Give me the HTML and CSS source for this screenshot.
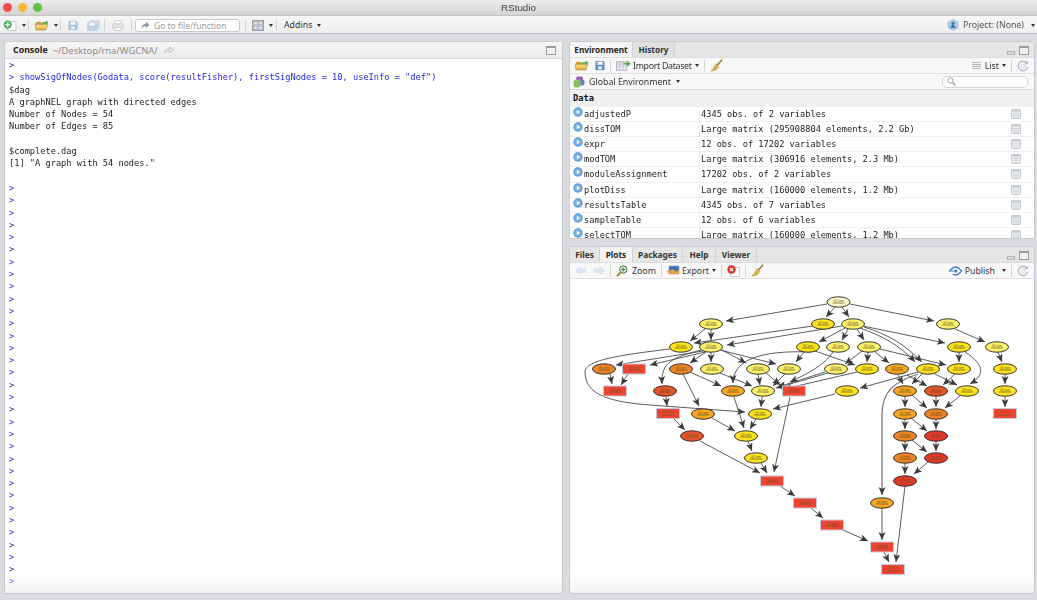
FILE: index.html
```html
<!DOCTYPE html>
<html lang="en">
<head>
<meta charset="utf-8">
<title>RStudio</title>
<link rel="stylesheet" href="styles.css">
</head>
<body>
<svg class="defs" width="0" height="0" aria-hidden="true">
  <defs>
    <linearGradient id="folderFill" x1="0" y1="0" x2="0" y2="1"><stop offset="0" stop-color="#fbe58a"/><stop offset="1" stop-color="#d9a93a"/></linearGradient>
    <linearGradient id="floppyFill" x1="0" y1="0" x2="0" y2="1"><stop offset="0" stop-color="#7fa9d6"/><stop offset="1" stop-color="#4a7fb8"/></linearGradient>
    <symbol id="i-folder" viewBox="0 0 16 12">
      <path d="M1 4 L3 2 H7 L8 3 H12 V5 H1Z" fill="#c79a3a"/>
      <path d="M1 5 H13 L15 5 L12.500 11 H2 Z" fill="url(#folderFill)" stroke="#a87f2a" stroke-width=".6"/>
      <path d="M9 2.500 H12.500 V.5 L15.800 3 L12.500 5.500 V3.800 H9Z" fill="#4faa4b"/>
    </symbol>
    <symbol id="i-floppy" viewBox="0 0 12 12">
      <path d="M1 1 H10 L11 2 V11 H1Z" fill="url(#floppyFill)" stroke="#3f6f9f" stroke-width=".6"/>
      <rect x="3" y="1.500" width="6" height="3.500" fill="#fff"/>
      <rect x="3.500" y="7" width="5" height="3.600" fill="#dfe9f3"/>
    </symbol>
    <symbol id="i-broom" viewBox="0 0 14 14">
      <path d="M13 .8 L7.500 7" stroke="#9c6b2c" stroke-width="1.500" fill="none"/>
      <path d="M6.500 5 L9.500 8 C8 11 5 13 1 13 C3 11.500 4.500 8 6.500 5Z" fill="#e5b84d" stroke="#a9802b" stroke-width=".5"/>
      <path d="M6 9 L3.800 12 M7.500 9.500 L5.500 12" stroke="#a9802b" stroke-width=".5"/>
    </symbol>
    <symbol id="i-refresh" viewBox="0 0 12 12">
      <path d="M9.800 3.200 A4.700 4.700 0 1 0 10.600 6.800" fill="none" stroke="#aebccb" stroke-width="1.300"/>
      <path d="M7.500 4.200 H11 V.8Z" fill="#aebccb"/>
      <circle cx="6" cy="6" r="2" fill="none" stroke="#ccd5de"/>
    </symbol>
    <symbol id="i-table" viewBox="0 0 11 11">
      <rect x=".5" y=".5" width="10" height="10" rx="1" fill="#f1f3f6" stroke="#bcc2ca"/>
      <rect x="1" y="1" width="9" height="2" fill="#c7ccd3"/>
      <path d="M1 5 H10 M1 7 H10 M1 9 H10 M3.500 3 V10 M5.500 3 V10 M7.500 3 V10" stroke="#ccd1d8" stroke-width=".6"/>
    </symbol>
    <symbol id="i-play" viewBox="0 0 10 10">
      <circle cx="5" cy="5" r="4.700" fill="#5a97d3"/>
      <circle cx="5" cy="5" r="3.600" fill="#7eb1e2"/>
      <path d="M3.800 2.800 L7 5 L3.800 7.200Z" fill="#fff"/>
    </symbol>
    <symbol id="i-min" viewBox="0 0 10 5"><rect x=".5" y="1" width="9" height="3" fill="#e8e8e8" stroke="#9a9a9a"/></symbol>
    <symbol id="i-max" viewBox="0 0 10 9"><rect x=".5" y=".5" width="9" height="8" fill="#f2f2f2" stroke="#9a9a9a"/><path d="M1 1.500 H9" stroke="#9a9a9a"/></symbol>
    <symbol id="i-import" viewBox="0 0 16 11">
      <rect x=".5" y="1.500" width="11" height="9" fill="#e9ecf0" stroke="#a9b0b8"/>
      <path d="M.5 4 H11.500 M.5 6.500 H11.500 M4 1.500 V10.500 M7.500 1.500 V10.500" stroke="#b4bac1" stroke-width=".6"/>
      <path d="M8 2.800 H12 V.5 L15.800 3.500 L12 6.500 V4.500 H8Z" fill="#4faa4b"/>
    </symbol>
    <g id="n-e">
      <ellipse class="node-shape" rx="11.500" ry="5.200"/>
      <text class="node-label" y="-.4">GO term</text>
      <text class="node-label" y="2.400">annotation</text>
    </g>
    <g id="n-r">
      <rect class="node-box" x="-11.500" y="-5" width="23" height="10"/>
      <text class="node-label" y="-.4">GO term</text>
      <text class="node-label" y="2.400">annotation</text>
    </g>
    <marker id="arrow" markerWidth="9" markerHeight="8" refX="8" refY="3.500" orient="auto" markerUnits="userSpaceOnUse">
      <path d="M0 0 L8 3.500 L0 7 L2 3.500Z" fill="#3a3a3a"/>
    </marker>
  </defs>
</svg>

<div class="app">
  <header class="titlebar">
    <div class="lights"><span class="light red"></span><span class="light amber"></span><span class="light green"></span></div>
    <div class="title">RStudio</div>
  </header>

  <nav class="toolbar">
    <svg class="ic ic-new" viewBox="0 0 15 12"><rect x="5" y="2" width="9" height="9.500" fill="#fff" stroke="#aab0b8" stroke-width=".7"/><circle cx="5" cy="5" r="4.500" fill="#4fb060"/><path d="M5 2.500 V7.500 M2.500 5 H7.500" stroke="#fff" stroke-width="1.400"/></svg>
    <span class="caret"></span>
    <span class="sep sep-new"></span>
    <svg class="ic ic-open"><use href="#i-folder"/></svg>
    <span class="caret"></span>
    <span class="sep sep-open"></span>
    <svg class="ic ic-save dim"><use href="#i-floppy"/></svg>
    <svg class="ic ic-saveall dim" viewBox="0 0 14 12"><rect x="3.500" y=".5" width="10" height="9" fill="#aec6de" stroke="#8ea9c4" stroke-width=".6"/><path d="M.5 2.500 H9.500 L10.500 3.500 V11.500 H.5Z" fill="#8fb1d3" stroke="#7c9cbc" stroke-width=".6"/><rect x="2.500" y="3" width="6" height="3" fill="#fff"/></svg>
    <span class="sep sep-save"></span>
    <svg class="ic ic-print dim" viewBox="0 0 13 12"><rect x="3" y=".5" width="7" height="4" fill="#fff" stroke="#b4b4b4"/><rect x=".5" y="4" width="12" height="5.500" rx="1" fill="#cfcfcf" stroke="#b0b0b0"/><rect x="3" y="8" width="7" height="3.500" fill="#fff" stroke="#b4b4b4"/></svg>
    <span class="sep sep-print"></span>
    <div class="goto">
      <svg class="goto-arrow" viewBox="0 0 10 9"><path d="M.5 8.500 C1 5 3 3.500 5.500 3.500 V.5 L9.500 4.500 L5.500 8 V5.500 C3.500 5.500 2 6.500 .5 8.500Z" fill="#8f9398"/></svg>
      <span>Go to file/function</span>
    </div>
    <span class="sep sep-goto"></span>
    <svg class="ic ic-grid" viewBox="0 0 13 12"><rect x=".5" y=".5" width="12" height="11" fill="#c6ccd4" stroke="#949aa2"/><path d="M2 2 H5.500 V5.200 H2Z M7.500 2 H11 V5.200 H7.500Z M2 6.800 H5.500 V10 H2Z M7.500 6.800 H11 V10 H7.500Z" fill="#eef0f3" stroke="#8d939b" stroke-width=".5"/></svg>
    <span class="caret"></span>
    <span class="sep sep-grid"></span>
    <span class="tool-label">Addins</span>
    <span class="caret"></span>
    <div class="project">
      <svg class="ic ic-project" viewBox="0 0 12 12"><path d="M6 .5 L11 3 V9 L6 11.500 L1 9 V3Z" fill="#a8cbe6" stroke="#8db3d2" stroke-width=".5"/><circle cx="6" cy="4.200" r="1.500" fill="#44709c"/><path d="M3.300 9 L5.200 5.500 H6.800 L8.700 9Z" fill="#44709c"/></svg>
      <span class="tool-label project-label">Project: (None)</span>
      <span class="caret"></span>
    </div>
  </nav>

  <main class="workspace">
    <section class="pane console">
      <div class="console-head">
        <span class="console-tab">Console</span>
        <span class="console-path">~/Desktop/rna/WGCNA/</span>
        <svg class="console-link" viewBox="0 0 11 8"><path d="M.5 7.500 C1 4 3 2.800 6 2.800 V.7 L10.500 3.800 L6 6.800 V4.800 C3.800 4.800 2 5.500 .5 7.500Z" fill="none" stroke="#aeb2b8" stroke-width=".8"/></svg>
        <svg class="head-icon console-max"><use href="#i-max"/></svg>
      </div>
<pre class="console-text"><span class="in">&gt;
&gt; showSigOfNodes(Godata, score(resultFisher), firstSigNodes = 10, useInfo = "def")
</span>$dag
A graphNEL graph with directed edges
Number of Nodes = 54
Number of Edges = 85

$complete.dag
[1] "A graph with 54 nodes."

<span class="in">&gt;
&gt;
&gt;
&gt;
&gt;
&gt;
&gt;
&gt;
&gt;
&gt;
&gt;
&gt;
&gt;
&gt;
&gt;
&gt;
&gt;
&gt;
&gt;
&gt;
&gt;
&gt;
&gt;
&gt;
&gt;
&gt;
&gt;
&gt;
&gt;
&gt;
&gt;
&gt;
&gt;</span></pre>
    </section>

    <div class="right">
      <section class="pane env">
        <div class="tabs">
          <span class="tab active env-tab">Environment</span>
          <span class="tab history-tab">History</span>
          <span class="tab-tools"><svg class="head-icon min"><use href="#i-min"/></svg><svg class="head-icon"><use href="#i-max"/></svg></span>
        </div>
        <div class="pane-tools">
          <svg class="ic ic-open"><use href="#i-folder"/></svg>
          <svg class="ic ic-save"><use href="#i-floppy"/></svg>
          <span class="sep"></span>
          <svg class="ic ic-import"><use href="#i-import"/></svg>
          <span class="tool-label import-label">Import Dataset</span>
          <span class="caret"></span>
          <span class="sep"></span>
          <svg class="ic ic-broom"><use href="#i-broom"/></svg>
          <span class="push"></span>
          <svg class="ic ic-list" viewBox="0 0 9 8"><path d="M0 .5 H9 M0 2.500 H9 M0 4.500 H9 M0 6.500 H9" stroke="#b6b6b6"/></svg>
          <span class="tool-label">List</span>
          <span class="caret"></span>
          <span class="sep"></span>
          <svg class="ic ic-refresh"><use href="#i-refresh"/></svg>
        </div>
        <div class="scope-bar">
          <svg class="ic ic-env" viewBox="0 0 12 12"><rect x="3" y=".5" width="7" height="7" rx="2" fill="#9b59b6"/><rect x="6" y="3.500" width="5.500" height="6" rx="2" fill="#6d7fc4"/><rect x=".5" y="3.500" width="7" height="8" rx="2.500" fill="#8cbf63"/></svg>
          <span class="tool-label">Global Environment</span>
          <span class="caret"></span>
          <span class="push"></span>
          <div class="search"><svg class="search-icon" viewBox="0 0 9 9"><circle cx="3.500" cy="3.500" r="2.700" fill="none" stroke="#9a9a9a"/><path d="M5.500 5.500 L8.500 8.500" stroke="#9a9a9a" stroke-width="1.300"/></svg></div>
        </div>
        <div class="data-head">Data</div>
        <div class="rows">
          <div class="row"><span class="name"><svg class="play"><use href="#i-play"/></svg>adjustedP</span><span class="value">4345 obs. of 2 variables</span><svg class="grid-ic"><use href="#i-table"/></svg></div>
          <div class="row"><span class="name"><svg class="play"><use href="#i-play"/></svg>dissTOM</span><span class="value">Large matrix (295908804 elements, 2.2 Gb)</span><svg class="grid-ic"><use href="#i-table"/></svg></div>
          <div class="row"><span class="name"><svg class="play"><use href="#i-play"/></svg>expr</span><span class="value">12 obs. of 17202 variables</span><svg class="grid-ic"><use href="#i-table"/></svg></div>
          <div class="row"><span class="name"><svg class="play"><use href="#i-play"/></svg>modTOM</span><span class="value">Large matrix (306916 elements, 2.3 Mb)</span><svg class="grid-ic"><use href="#i-table"/></svg></div>
          <div class="row"><span class="name"><svg class="play"><use href="#i-play"/></svg>moduleAssignment</span><span class="value">17202 obs. of 2 variables</span><svg class="grid-ic"><use href="#i-table"/></svg></div>
          <div class="row"><span class="name"><svg class="play"><use href="#i-play"/></svg>plotDiss</span><span class="value">Large matrix (160000 elements, 1.2 Mb)</span><svg class="grid-ic"><use href="#i-table"/></svg></div>
          <div class="row"><span class="name"><svg class="play"><use href="#i-play"/></svg>resultsTable</span><span class="value">4345 obs. of 7 variables</span><svg class="grid-ic"><use href="#i-table"/></svg></div>
          <div class="row"><span class="name"><svg class="play"><use href="#i-play"/></svg>sampleTable</span><span class="value">12 obs. of 6 variables</span><svg class="grid-ic"><use href="#i-table"/></svg></div>
          <div class="row"><span class="name"><svg class="play"><use href="#i-play"/></svg>selectTOM</span><span class="value">Large matrix (160000 elements, 1.2 Mb)</span><svg class="grid-ic"><use href="#i-table"/></svg></div>
        </div>
      </section>

      <section class="pane plots">
        <div class="tabs">
          <span class="tab files-tab">Files</span>
          <span class="tab active plots-tab">Plots</span>
          <span class="tab packages-tab">Packages</span>
          <span class="tab help-tab">Help</span>
          <span class="tab viewer-tab">Viewer</span>
          <span class="tab-tools"><svg class="head-icon min"><use href="#i-min"/></svg><svg class="head-icon"><use href="#i-max"/></svg></span>
        </div>
        <div class="pane-tools">
          <svg class="ic ic-nav" viewBox="0 0 12 10"><path d="M.5 5 L5.500 .8 V3 H11.500 V7 H5.500 V9.200Z" fill="#dfe8f2" stroke="#c6d3e0" stroke-width=".6"/></svg>
          <svg class="ic ic-nav nav-next" viewBox="0 0 12 10"><path d="M11.500 5 L6.500 .8 V3 H.5 V7 H6.500 V9.200Z" fill="#dfe8f2" stroke="#c6d3e0" stroke-width=".6"/></svg>
          <span class="sep"></span>
          <svg class="ic ic-zoom" viewBox="0 0 12 12"><path d="M4.500 7.500 L1 11" stroke="#a9802b" stroke-width="2"/><circle cx="7.300" cy="4.500" r="3.700" fill="#cfe6c8" stroke="#4a7a55" stroke-width="1"/><path d="M7.300 2.700 V6.300 M5.500 4.500 H9.100" stroke="#3f8a45"/></svg>
          <span class="tool-label zoom-label">Zoom</span>
          <span class="sep"></span>
          <svg class="ic ic-export" viewBox="0 0 13 11"><rect x="2" y="1" width="10" height="8" fill="#3f6fb4" stroke="#97a6b8" stroke-width=".6"/><path d="M2 7 L6 4 L9 6.500 L12 5 V9 H2Z" fill="#d9a64a"/><path d="M0 5.500 H4 V4 L6.500 6.500 L4 9 V7.500 H0Z" fill="#e9a23a"/></svg>
          <span class="tool-label">Export</span>
          <span class="caret"></span>
          <span class="sep"></span>
          <svg class="ic ic-clear" viewBox="0 0 13 12"><rect x="3.500" y="2.500" width="9" height="9" fill="#fff" stroke="#b6bcc4" stroke-width=".7"/><circle cx="4.500" cy="4.500" r="4.200" fill="#d8312b"/><path d="M2.800 2.800 L6.200 6.200 M6.200 2.800 L2.800 6.200" stroke="#fff" stroke-width="1.200"/></svg>
          <span class="sep"></span>
          <svg class="ic ic-broom"><use href="#i-broom"/></svg>
          <span class="push"></span>
          <svg class="ic ic-publish" viewBox="0 0 13 10"><path d="M.5 5 C3 2 4 1 6.500 1 C9 1 10.500 2.500 12.500 5 C10.500 7.500 9 9 6.500 9 C5.500 9 4.500 8.700 3.500 8" fill="none" stroke="#3d7fc4" stroke-width="1.300"/><circle cx="6.800" cy="5" r="1.600" fill="#3d7fc4"/><path d="M0 5 H5" stroke="#3d7fc4"/></svg>
          <span class="tool-label">Publish</span>
          <span class="caret publish-caret"></span>
          <span class="sep"></span>
          <svg class="ic ic-refresh"><use href="#i-refresh"/></svg>
        </div>
        <div class="plot-area">
          <svg class="graph" viewBox="569 279 466 315">
            <g class="edges" marker-end="url(#arrow)">
              <path d="M827 304 L726 321"/><path d="M835 307 L826 317"/><path d="M842 307 L849 317"/><path d="M850 304 L934 321"/>
              <path d="M705 329 L690 341"/><path d="M711 329 L711 340"/><path d="M813 326 L694 343"/><path d="M842 326 L727 345"/>
              <path d="M670 349 C620 355 585 360 585 372 C585 395 610 402 650 405 L745 412"/>
              <path d="M703 351 L616 365"/><path d="M705 352 L650 365"/><path d="M706 352 L690 363"/><path d="M711 352 L711 362"/><path d="M722 350 L746 363"/><path d="M720 350 L776 364"/>
              <path d="M701 350 C672 358 661 362 662 384"/>
              <path d="M610 374 L612 384"/><path d="M628 374 L621 385"/>
              <path d="M690 372 L721 386"/><path d="M683 374 L699 406"/><path d="M720 373 L752 386"/>
              <path d="M758 374 L760 385"/><path d="M765 372 L780 385"/><path d="M785 374 L773 386"/>
              <path d="M666 397 L667 406"/><path d="M673 418 L685 430"/><path d="M712 418 L735 431"/><path d="M734 397 L744 428"/>
              <path d="M762 397 L761 407"/><path d="M756 419 L750 429"/><path d="M835 394 L773 409"/>
              <path d="M790 397 L774 472"/><path d="M700 441 L760 473"/><path d="M748 441 L752 451"/><path d="M761 463 L767 473"/>
              <path d="M780 486 L795 496"/><path d="M811 508 L823 518"/><path d="M843 530 L868 541"/><path d="M882 508 L882 540"/>
              <path d="M884 552 L889 562"/><path d="M905 486 L896 562"/>
              <path class="thick" d="M918 374 C895 382 882 390 882 415 L882 495"/>
              <path d="M905 396 L905 407"/><path d="M912 395 L927 408"/><path d="M936 396 L936 407"/><path d="M960 396 L945 408"/>
              <path d="M905 419 L905 429"/><path d="M911 418 L927 431"/><path d="M936 419 L936 429"/><path d="M905 441 L905 451"/><path d="M912 440 L927 452"/><path d="M936 441 L936 451"/><path d="M905 463 L905 474"/><path d="M928 462 L914 474"/>
              <path d="M922 374 L912 384"/><path d="M898 375 L903 384"/><path d="M907 375 L927 386"/><path d="M935 374 L957 385"/><path d="M918 372 L860 388"/><path d="M955 374 L943 385"/>
              <path d="M959 352 L959 362"/><path d="M965 352 C985 365 985 375 970 384"/>
              <path d="M862 351 L845 364"/><path d="M868 352 L867 362"/><path d="M875 352 L889 363"/><path d="M880 349 L946 365"/>
              <path d="M833 352 C825 365 805 375 790 382"/><path d="M804 352 L796 362"/><path d="M815 351 L855 365"/>
              <path d="M848 329 L842 340"/><path d="M857 329 L864 340"/><path d="M845 328 L819 342"/><path d="M863 326 L945 343"/>
              <path d="M864 327 C890 335 905 345 922 362"/><path d="M860 328 C880 335 900 345 915 362"/>
              <path d="M955 329 L985 342"/><path d="M998 352 L1002 362"/><path d="M1005 374 L1005 384"/><path d="M1005 396 L1005 407"/>
              <path d="M811 352 C760 350 733 360 733 383"/>
              <path d="M825 372 L778 387"/><path d="M828 373 L776 388"/><path d="M857 372 L784 389"/>
            </g>
            <g class="nodes">
              <use href="#n-e" x="838.500" y="302" class="pale"/>
              <use href="#n-e" x="711" y="324" class="light"/><use href="#n-e" x="823" y="324" class="yellow"/><use href="#n-e" x="853" y="324" class="light"/><use href="#n-e" x="948" y="324" class="light"/>
              <use href="#n-e" x="681" y="347" class="yellow"/><use href="#n-e" x="711" y="347" class="light"/><use href="#n-e" x="808" y="347" class="yellow"/><use href="#n-e" x="838" y="347" class="light"/><use href="#n-e" x="869" y="347" class="light"/><use href="#n-e" x="959" y="347" class="yellow"/><use href="#n-e" x="997" y="347" class="light"/>
              <use href="#n-e" x="604" y="369" class="orange"/><use href="#n-r" x="634" y="369"/><use href="#n-e" x="681" y="369" class="orange"/><use href="#n-e" x="712" y="369" class="light"/><use href="#n-e" x="758" y="369" class="light"/><use href="#n-e" x="789" y="369" class="light"/><use href="#n-e" x="836" y="369" class="light"/><use href="#n-e" x="867" y="369" class="yellow"/><use href="#n-e" x="897" y="369" class="amber"/><use href="#n-e" x="928" y="369" class="yellow"/><use href="#n-e" x="959" y="369" class="yellow"/><use href="#n-e" x="1005" y="369" class="yellow"/>
              <use href="#n-r" x="615" y="391"/><use href="#n-e" x="665" y="391" class="redorange"/><use href="#n-e" x="733" y="391" class="amber"/><use href="#n-e" x="763" y="391" class="light"/><use href="#n-r" x="794" y="391"/><use href="#n-e" x="847" y="391" class="yellow"/><use href="#n-e" x="905" y="391" class="amber"/><use href="#n-e" x="936" y="391" class="redorange"/><use href="#n-e" x="967" y="391" class="yellow"/><use href="#n-e" x="1005" y="391" class="yellow"/>
              <use href="#n-r" x="668" y="413.500"/><use href="#n-e" x="703" y="414" class="amber"/><use href="#n-e" x="760" y="414" class="yellow"/><use href="#n-e" x="905" y="414" class="amber"/><use href="#n-e" x="936" y="414" class="orange"/><use href="#n-r" x="1005" y="413.500"/>
              <use href="#n-e" x="692" y="436" class="redorange"/><use href="#n-e" x="746" y="436" class="yellow"/><use href="#n-e" x="905" y="436" class="orange"/><use href="#n-e" x="936" y="436" class="red"/>
              <use href="#n-e" x="756" y="458" class="yellow"/><use href="#n-e" x="905" y="458" class="orange"/><use href="#n-e" x="936" y="458" class="red"/>
              <use href="#n-r" x="772" y="481"/><use href="#n-e" x="905" y="481" class="red"/>
              <use href="#n-r" x="805" y="503"/><use href="#n-e" x="882" y="503" class="amber"/>
              <use href="#n-r" x="832" y="525"/>
              <use href="#n-r" x="882" y="547"/>
              <use href="#n-r" x="893" y="569.500"/>
            </g>
          </svg>
        </div>
      </section>
    </div>
  </main>
</div>
</body>
</html>
```
FILE: styles.css
```css
* { box-sizing: border-box; }
html, body { margin: 0; padding: 0; }
body {
  width: 1037px;
  height: 600px;
  overflow: hidden;
  font-family: "Noto Sans", "DejaVu Sans", sans-serif;
  font-size: 8.800px;
  color: #2c2c2c;
  background: #d9dbdf;
}
.defs { display: block; height: 0; }
.app {
  display: flex;
  flex-direction: column;
  height: 600px;
  filter: blur(.35px);
}

/* title bar */
.titlebar {
  flex: 0 0 15px;
  display: flex;
  align-items: center;
  justify-content: center;
  position: relative;
  background: linear-gradient(#ececec, #d3d3d3);
}
.lights {
  position: absolute;
  left: 3px;
  top: 3px;
  display: flex;
  gap: 6px;
}
.light { width: 9px; height: 9px; border-radius: 50%; }
.light.red { background: #f0504a; }
.light.amber { background: #f5b83a; }
.light.green { background: #5cc24a; }
.title { font-family: "Liberation Sans", sans-serif; font-size: 9.800px; color: #444; }

/* main toolbar */
.toolbar {
  flex: 0 0 19px;
  display: flex;
  align-items: center;
  padding: 1px 2px 0 3px;
  background: linear-gradient(#f6f6f6, #eeeeee);
  border-top: 1px solid #c4c4c4;
  border-bottom: 1px solid #b9bbbf;
}
.ic { display: block; flex: none; }
.ic-new { width: 14px; height: 11px; }
.ic-open { width: 15px; height: 11px; }
.ic-save { width: 10px; height: 11px; }
.ic-saveall { width: 13px; height: 11px; margin-left: 9px; }
.ic-print { width: 12px; height: 11px; }
.ic-grid { width: 12px; height: 11px; }
.ic-project { width: 12px; height: 12px; }
.dim { opacity: .5; }
.caret {
  flex: none;
  width: 0;
  height: 0;
  margin-left: 5px;
  border-left: 2.500px solid transparent;
  border-right: 2.500px solid transparent;
  border-top: 3px solid #333;
}
.sep {
  flex: none;
  width: 1px;
  height: 12px;
  margin: 0 5px;
  background: #d3d3d3;
}
.sep-new { margin: 0 5px 0 2px; }
.sep-open { margin: 0 7px 0 2px; }
.sep-save { margin: 0 7px 0 4px; }
.sep-print { margin: 0 3px 0 7px; }
.sep-goto { margin: 0 6px 0 5px; }
.sep-grid { margin: 0 7px 0 3px; }
.goto {
  display: flex;
  align-items: center;
  gap: 4px;
  width: 105px;
  height: 13px;
  padding-left: 5px;
  background: #fff;
  border: 1px solid #c8c8c8;
  border-radius: 3px;
  color: #9a9a9a;
  font-size: 8.500px;
  white-space: nowrap;
}
.goto-arrow { width: 9px; height: 8px; flex: none; }
.tool-label { font-size: 8.800px; white-space: nowrap; color: #333; }
.project { margin-left: auto; display: flex; align-items: center; gap: 4px; }
.project .caret { margin-left: 3px; }
.project-label { color: #555; }

/* workspace */
.workspace {
  flex: 1;
  display: grid;
  grid-template-columns: 559px 466px;
  column-gap: 6px;
  padding: 7px 2px 6px 4px;
  min-height: 0;
}
.pane {
  display: flex;
  flex-direction: column;
  background: #fff;
  border: 1px solid #c9cbcf;
  border-radius: 3px 3px 0 0;
  overflow: hidden;
  position: relative;
}
.pane::after {
  content: "";
  position: absolute;
  left: 0;
  right: 0;
  bottom: 0;
  height: 20px;
  background: linear-gradient(rgba(240,240,242,0), rgba(240,240,242,.9));
  pointer-events: none;
}
.env::after { display: none; }
.right { display: flex; flex-direction: column; gap: 7px; min-height: 0; }
.env { flex: 0 0 198px; }
.plots { flex: 1; min-height: 0; }

/* console */
.console-head {
  flex: 0 0 17px;
  display: flex;
  align-items: center;
  padding: 0 6px 0 8px;
  background: linear-gradient(#f5f5f5, #ececec);
  border-bottom: 1px solid #d9d9d9;
}
.console-tab { font-weight: bold; font-size: 8.800px; color: #222; }
.console-path { margin-left: 5px; font-size: 9.400px; color: #8b8b8b; }
.console-link { width: 10px; height: 8px; margin-left: 6px; }
.head-icon { width: 10px; height: 9px; display: block; flex: none; }
.console-max { margin-left: auto; }
.console-text {
  margin: 0;
  padding: 0 0 0 4px;
  font-family: "DejaVu Sans Mono", monospace;
  font-size: 8.670px;
  line-height: 12.300px;
  color: #1c1c1c;
}
.in { color: #1f1fe6; }

/* tabs */
.tabs {
  flex: 0 0 16px;
  display: flex;
  align-items: stretch;
  background: #e5e5e5;
  border-bottom: 1px solid #dcdcdc;
}
.tab {
  display: flex;
  align-items: center;
  justify-content: center;
  font-size: 8.300px;
  font-weight: bold;
  color: #333;
  border-right: 1px solid #d2d2d2;
}
.tab.active { background: #f5f5f5; color: #222; }
.env-tab { width: 63px; }
.history-tab { width: 42px; background: #e0e0e0; }
.files-tab { width: 30px; }
.plots-tab { width: 33px; }
.packages-tab { width: 50px; }
.help-tab { width: 33px; }
.viewer-tab { width: 41px; }
.tab-tools {
  margin-left: auto;
  display: flex;
  align-items: flex-end;
  gap: 3px;
  padding: 0 5px 2px 0;
}
.head-icon.min { height: 4px; }

/* pane toolbars */
.pane-tools {
  flex: 0 0 16px;
  display: flex;
  align-items: center;
  padding: 0 5px 0 4px;
  background: #f8f8f8;
  border-bottom: 1px solid #dedede;
}
.pane-tools .ic-save { margin-left: 6px; }
.pane-tools .caret { margin-left: 3px; }
.pane-tools .publish-caret { margin-left: 7px; }
.import-label { letter-spacing: -.3px; }
.ic-import { width: 15px; height: 11px; margin-right: 2px; }
.ic-broom { width: 13px; height: 13px; }
.ic-list { width: 9px; height: 8px; margin-right: 4px; }
.ic-refresh { width: 12px; height: 12px; }
.ic-nav { width: 11px; height: 9px; margin-left: 1px; }
.nav-next { margin-left: 8px; }
.ic-zoom { width: 12px; height: 12px; }
.zoom-label { margin-left: 4px; }
.ic-export { width: 13px; height: 11px; margin-right: 2px; }
.ic-clear { width: 13px; height: 12px; }
.ic-publish { width: 13px; height: 10px; margin-right: 3px; }
.push { flex: 1; }
.scope-bar {
  flex: 0 0 16px;
  display: flex;
  align-items: center;
  padding: 0 5px 0 3px;
  background: #f8f8f8;
  border-bottom: 1px solid #d6d6d6;
}
.ic-env { width: 12px; height: 12px; margin-right: 4px; }
.search {
  width: 86px;
  height: 12px;
  background: #fff;
  border: 1px solid #d5d5d5;
  border-radius: 5px;
  display: flex;
  align-items: center;
  padding-left: 4px;
  margin-right: 1px;
}
.search-icon { width: 9px; height: 9px; }

/* environment table */
.data-head {
  flex: 0 0 16.600px;
  display: flex;
  align-items: center;
  padding-left: 3px;
  font-family: "DejaVu Sans Mono", monospace;
  font-weight: bold;
  font-size: 8.670px;
  color: #111;
  background: #f0f0f0;
}
.rows { flex: 1; overflow: hidden; min-height: 0; }
.row {
  height: 15.200px;
  display: flex;
  align-items: center;
  font-family: "DejaVu Sans Mono", monospace;
  font-size: 8.670px;
  color: #222;
  border-bottom: 1px solid #efefef;
}
.name {
  flex: 0 0 130px;
  height: 100%;
  display: flex;
  align-items: center;
  padding-left: 3px;
  border-right: 1px solid #efefef;
}
.play { width: 10px; height: 10px; margin: -4px 1px 0 0; flex: none; }
.value { flex: 1; padding-left: 1px; white-space: nowrap; }
.grid-ic { width: 10px; height: 10px; margin-right: 13px; flex: none; }

/* plot */
.plot-area { flex: 1; min-height: 0; background: #fff; }
.graph { display: block; width: 466px; height: 315px; margin: 0 0 0 -1px; }
.edges path { fill: none; stroke: #4a4a4a; stroke-width: .9; }
.edges .thick { stroke: #777; stroke-width: 1.300; }
.nodes { fill: #eee; }
.node-shape { stroke: #222; stroke-width: .9; }
.node-box { fill: #ee4433; stroke: #c3cbdf; stroke-width: 1; }
.node-label {
  font-family: "Liberation Sans", sans-serif;
  font-size: 2.600px;
  text-anchor: middle;
  fill: #6a5218;
  stroke: none;
}
.pale { fill: #fdfbc8; }
.light { fill: #fbf16b; }
.yellow { fill: #fbe31f; }
.amber { fill: #f6a623; }
.orange { fill: #ee8326; }
.redorange { fill: #e8542a; }
.red { fill: #e6382a; }
```
